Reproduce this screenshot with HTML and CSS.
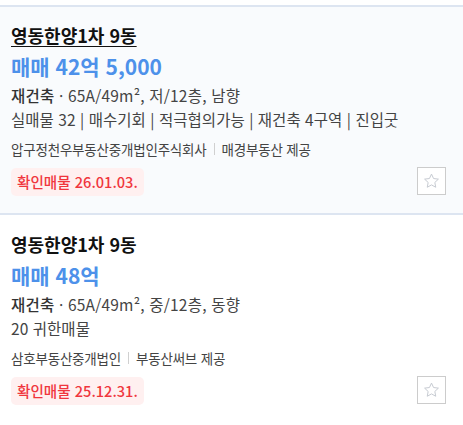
FILE: index.html
```html
<!DOCTYPE html>
<html lang="ko">
<head>
<meta charset="utf-8">
<link rel="stylesheet" href="styles.css">
</head>
<body>
<div class="list">
  <div class="item item-active">
    <div class="title title-underline">영동한양1차 9동</div>
    <div class="price">매매 42억 5,000</div>
    <div class="spec"><span class="type">재건축</span> · 65A/49m², 저/12층, 남향</div>
    <div class="desc">실매물 32 | 매수기회 | 적극협의가능 | 재건축 4구역 | 진입굿</div>
    <div class="agent"><span>압구정천우부동산중개법인주식회사</span><span class="sep"></span><span>매경부동산 제공</span></div>
    <div class="bottom">
      <span class="badge">확인매물 26.01.03.</span>
      <button class="star" aria-label="관심">
        <svg width="19" height="18" viewBox="0 0 24 24"><path d="M12 2.8l2.75 5.9 6.45.8-4.75 4.45 1.2 6.4L12 17.2l-5.65 3.15 1.2-6.4L2.8 9.5l6.45-.8z" fill="none" stroke="#c4c8d0" stroke-width="1.3" stroke-linejoin="round"/></svg>
      </button>
    </div>
  </div>
  <div class="item">
    <div class="title">영동한양1차 9동</div>
    <div class="price">매매 48억</div>
    <div class="spec"><span class="type">재건축</span> · 65A/49m², 중/12층, 동향</div>
    <div class="desc">20 귀한매물</div>
    <div class="agent"><span>삼호부동산중개법인</span><span class="sep"></span><span>부동산써브 제공</span></div>
    <div class="bottom">
      <span class="badge">확인매물 25.12.31.</span>
      <button class="star" aria-label="관심">
        <svg width="19" height="18" viewBox="0 0 24 24"><path d="M12 2.8l2.75 5.9 6.45.8-4.75 4.45 1.2 6.4L12 17.2l-5.65 3.15 1.2-6.4L2.8 9.5l6.45-.8z" fill="none" stroke="#c4c8d0" stroke-width="1.3" stroke-linejoin="round"/></svg>
      </button>
    </div>
  </div>
</div>
</body>
</html>
```
FILE: styles.css
```css
* { box-sizing: border-box; }
html, body { margin: 0; padding: 0; background: #fff; }
body {
  font-family: "Noto Sans CJK KR", "Noto Sans", sans-serif;
  color: #222;
  padding-top: 5px;
}
.item {
  border-top: 2px solid #dde5f1;
  padding: 15px 17px 17px 11px;
  background: #fff;
}
.item-active { background: #f9fbfd; }
.item + .item { padding-top: 16px; }
.title {
  font-size: 18px;
  font-weight: 700;
  line-height: 27px;
  color: #111;
}
.title-underline { text-decoration: underline; text-underline-offset: 3px; text-decoration-thickness: 1px; }
.price {
  margin-top: 3px;
  font-size: 21px;
  font-weight: 700;
  line-height: 28px;
  color: #4d91ea;
}
.spec, .desc {
  font-size: 15.5px;
  line-height: 22px;
  color: #444;
}
.spec { margin-top: 4px; letter-spacing: 0.2px; }
.desc { margin-top: 2px; letter-spacing: 0.05px; }
.type { font-weight: 500; color: #333; }
.agent {
  margin-top: 9px;
  display: flex;
  align-items: center;
  font-size: 13.5px;
  line-height: 20px;
  color: #444;
  letter-spacing: -0.2px;
}
.sep {
  display: inline-block;
  width: 1px;
  height: 12px;
  background: #d0d0d0;
  margin: 0 7px;
}
.bottom {
  margin-top: 9px;
  display: flex;
  justify-content: space-between;
  align-items: center;
}
.badge {
  display: inline-block;
  height: 28px;
  line-height: 28px;
  padding: 0 6px;
  border-radius: 5px;
  background: #fff0f0;
  color: #f0363d;
  font-size: 14.6px;
  font-weight: 500;
}
.star {
  width: 29px;
  height: 28px;
  padding: 0;
  border: 1px solid #ccc;
  background: #fff;
  display: flex;
  align-items: center;
  justify-content: center;
  margin-top: -2px;
}
```
